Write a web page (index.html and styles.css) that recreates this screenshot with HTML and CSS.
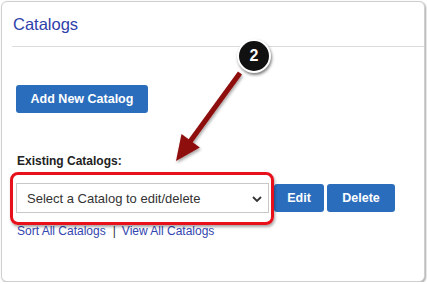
FILE: index.html
```html
<!DOCTYPE html>
<html lang="en">
<head>
    <meta charset="UTF-8">
    <title>Catalogs</title>
    <link rel="stylesheet" href="styles.css">
</head>
<body>
    <div class="panel">
        <div class="panel-header">
            <h2 class="panel-title">Catalogs</h2>
        </div>
        <div class="panel-body">
            <button class="button button-add">Add New Catalog</button>
            <div class="field-label">Existing Catalogs:</div>
            <div class="catalog-row">
                <div class="select-box">
                    <span>Select a Catalog to edit/delete</span>
                    <svg class="chevron" width="10" height="6" viewBox="0 0 10 6"><path d="M1 1 L5 5 L9 1" fill="none" stroke="#333" stroke-width="1.8"/></svg>
                </div>
                <button class="button button-edit">Edit</button>
                <button class="button button-delete">Delete</button>
            </div>
            <div class="links">
                <a href="#">Sort All Catalogs</a><span class="sep">|</span><a href="#">View All Catalogs</a>
            </div>
        </div>

        <!-- annotation overlay -->
        <div class="highlight"></div>
        <svg class="arrow" width="424" height="281" viewBox="0 0 424 281">
            <defs>
                <filter id="shadow" x="-20%" y="-20%" width="140%" height="140%">
                    <feDropShadow dx="1" dy="2" stdDeviation="1.5" flood-color="#000" flood-opacity="0.35"/>
                </filter>
            </defs>
            <g filter="url(#shadow)" transform="translate(-2,-2)">
                <line x1="241" y1="74" x2="190" y2="144" stroke="#8e0a0a" stroke-width="5"/>
                <polygon points="177,162 182.5,135 200.8,148.5" fill="#8e0a0a"/>
            </g>
        </svg>
        <div class="badge">2</div>
    </div>
</body>
</html>
```

FILE: styles.css
```css
body {
    margin: 0;
    background: #fff;
    font-family: "Liberation Sans", Arial, sans-serif;
}
.panel {
    position: relative;
    box-sizing: border-box;
    width: 424px;
    height: 281px;
    margin: 1px 0 0 1px;
    border: 1px solid #cfcfcf;
    border-radius: 6px;
    box-shadow: 1px 1px 2px rgba(0, 0, 0, 0.35);
    background: #fff;
}
.panel-header {
    margin-left: 10px;
    padding: 13px 0 12px 1px;
    border-bottom: 1px solid #dcdcdc;
}
.panel-title {
    margin: 0;
    font-size: 16.5px;
    line-height: 19px;
    font-weight: normal;
    color: #2d41aa;
}
.panel-body {
    padding: 38px 0 0 14px;
}
.button {
    display: inline-block;
    height: 28px;
    padding: 0 15px;
    border: none;
    border-radius: 3px;
    background: #2b6dbd;
    color: #fff;
    font-family: "Liberation Sans", Arial, sans-serif;
    font-size: 12.5px;
    font-weight: bold;
    line-height: 28px;
    cursor: pointer;
}
.button-add {
    width: 132px;
    padding: 0;
}
.field-label {
    margin: 41px 0 0 1px;
    font-size: 12px;
    font-weight: bold;
    line-height: 14px;
    color: #222;
}
.catalog-row {
    display: flex;
    align-items: center;
    margin-top: 15px;
}
.select-box {
    box-sizing: border-box;
    display: flex;
    align-items: center;
    justify-content: space-between;
    width: 253px;
    height: 30px;
    padding: 0 6px 0 10px;
    border: 1px solid #c8c8c8;
    font-size: 13px;
    color: #333;
}
.chevron {
    margin-top: 1px;
}
.button-edit {
    width: 50px;
    padding: 0;
    margin-left: 5px;
}
.button-delete {
    width: 68px;
    padding: 0;
    margin-left: 3px;
}
.links {
    margin: 11px 0 0 1px;
    font-size: 12px;
    line-height: 14px;
    color: #3346b0;
}
.links a {
    color: #3346b0;
    text-decoration: none;
}
.sep {
    margin: 0 6px 0 7px;
    color: #333;
}
.highlight {
    position: absolute;
    left: 8px;
    top: 170px;
    box-sizing: border-box;
    width: 264px;
    height: 53px;
    border: 3px solid #e8101a;
    border-radius: 8px;
    box-shadow: 1px 2px 3px rgba(0, 0, 0, 0.35);
}
.arrow {
    position: absolute;
    left: -1px;
    top: -1px;
    pointer-events: none;
}
.badge {
    position: absolute;
    left: 235px;
    top: 37px;
    width: 30px;
    height: 30px;
    border: 2px solid #fff;
    border-radius: 50%;
    background: #111;
    box-shadow: 1px 2px 3px rgba(0, 0, 0, 0.5);
    color: #fff;
    font-size: 16px;
    font-weight: bold;
    line-height: 30px;
    text-align: center;
}
```
